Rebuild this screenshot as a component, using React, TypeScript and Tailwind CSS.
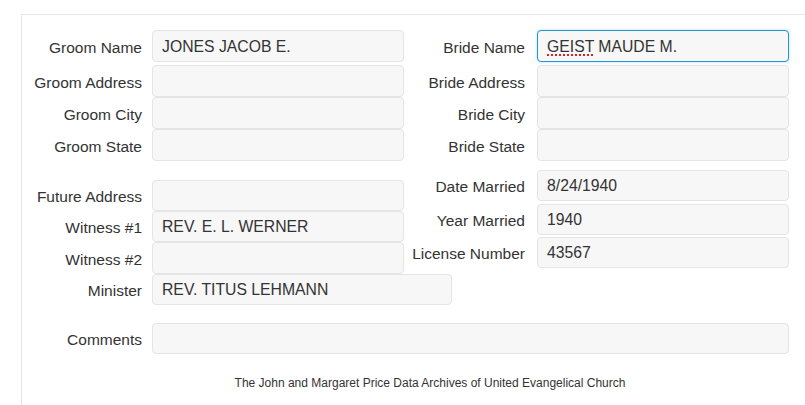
import React from 'react';

interface FieldProps {
  label: string;
  value?: React.ReactNode;
  labelW?: string;
  gap?: string;
  inputW?: string;
  h?: string;
  focused?: boolean;
  className?: string;
}

const Field: React.FC<FieldProps> = ({
  label,
  value,
  labelW = 'w-[120px]',
  gap = 'ml-[10px]',
  inputW = 'w-[252px]',
  h = 'h-[32px]',
  focused,
  className = '',
}) => (
  <div className={`flex items-center ${h} ${className}`}>
    <div className={`${labelW} shrink-0 pt-[3px] text-right whitespace-nowrap text-[#333]`}>{label}</div>
    <div
      className={`${gap} ${inputW} h-full shrink-0 flex items-center px-[9px] pt-[1px] rounded-[4px] border bg-[#f7f7f7] text-[15.75px] text-[#333] ${
        focused ? 'border-[#2196d3] shadow-[0_0_3px_rgba(33,150,211,0.35)]' : 'border-[#e4e4e4]'
      }`}
    >
      {value}
    </div>
  </div>
);

const R = { labelW: 'w-[121px]', gap: 'ml-[12px]' };

const App: React.FC = () => {
  return (
    <div className="w-[805px] h-[405px] overflow-hidden bg-white font-['Liberation_Sans',Arial,sans-serif] text-[15.5px] leading-[20px]">
      <div className="ml-[21px] mt-[14px] w-[830px] h-[400px] border-t border-l border-[#e6e6e6] pt-[15px]">
        {/* names / addresses */}
        <div className="flex">
          <div className="w-[382px] flex flex-col">
            <Field label="Groom Name" value="JONES JACOB E." />
            <Field label="Groom Address" className="mt-[3px]" />
            <Field label="Groom City" />
            <Field label="Groom State" />
          </div>
          <div className="flex flex-col">
            <Field
              label="Bride Name"
              {...R}
              focused
              value={
                <span>
                  <span className="underline decoration-dotted decoration-[#e02020] decoration-[2px] underline-offset-[3px]">GEIST</span> MAUDE M.
                </span>
              }
            />
            <Field label="Bride Address" {...R} className="mt-[3px]" />
            <Field label="Bride City" {...R} />
            <Field label="Bride State" {...R} />
          </div>
        </div>

        {/* witnesses / dates */}
        <div className="flex">
          <div className="w-[382px] flex flex-col mt-[19px]">
            <Field label="Future Address" h="h-[31px]" />
            <Field label="Witness #1" value="REV. E. L. WERNER" h="h-[31px]" />
            <Field label="Witness #2" h="h-[32px]" />
            <Field label="Minister" value="REV. TITUS LEHMANN" h="h-[31px]" inputW="w-[300px]" />
          </div>
          <div className="flex flex-col mt-[9px]">
            <Field label="Date Married" value="8/24/1940" {...R} h="h-[31px]" />
            <Field label="Year Married" value="1940" {...R} h="h-[31px]" className="mt-[3px]" />
            <Field label="License Number" value="43567" {...R} h="h-[31px]" className="mt-[2px]" />
          </div>
        </div>

        <Field label="Comments" inputW="w-[637px]" h="h-[31px]" className="mt-[18px]" />

        <div className="w-[816px] mt-[21px] text-center text-[12px] leading-[17px] text-[#333]">
          The John and Margaret Price Data Archives of United Evangelical Church
        </div>
      </div>
    </div>
  );
};

export default App;
